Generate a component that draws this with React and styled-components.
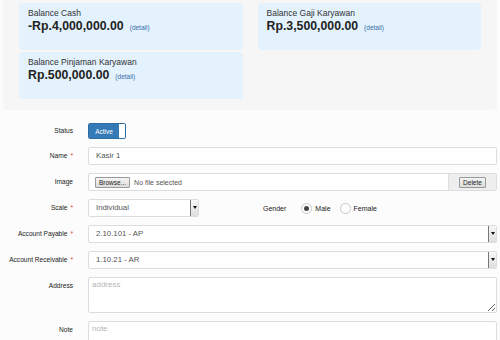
import React from "react";
import styled, { createGlobalStyle } from "styled-components";

const GlobalStyle = createGlobalStyle`
  body {
    margin: 0;
    background: #fcfcfc;
    font-family: "Liberation Sans", Arial, sans-serif;
    color: #333;
  }
`;

const Summary = styled.div`
  margin: 0 3px;
  padding: 3px 16px 11px;
  background: #f6f6f6;
  border-radius: 0 0 4px 4px;
  display: grid;
  grid-template-columns: 1fr 1fr;
  column-gap: 15px;
  row-gap: 2px;
`;

const Card = styled.div`
  height: 47px;
  box-sizing: border-box;
  padding: 5px 9px;
  background: #e3f2fd;
  border-radius: 3px;
`;

const CardLabel = styled.div`
  font-size: 8.5px;
  line-height: 11px;
  color: #333;
`;

const Amount = styled.div`
  font-size: 12.3px;
  line-height: 14px;
  font-weight: bold;
  color: #222;
  span {
    margin-left: 6px;
    font-size: 6.5px;
    font-weight: normal;
    color: #3b6ea8;
  }
`;

const Form = styled.div`
  padding: 13px 3px 0 0;
  display: flex;
  flex-direction: column;
  gap: 8px;
`;

const Row = styled.div`
  display: grid;
  grid-template-columns: 73px 1fr;
  column-gap: 15px;
  align-items: start;
`;

const Label = styled.div`
  text-align: right;
  font-size: 6.6px;
  line-height: ${(p) => p.$lh || 18}px;
  color: #222;
  white-space: nowrap;
  span {
    margin-left: 3px;
    color: #e0403c;
  }
`;

const Toggle = styled.div`
  display: flex;
  width: 38px;
  height: 16px;
  border: 1px solid #2e6da4;
  border-radius: 2px;
  box-sizing: border-box;
  overflow: hidden;
`;

const ToggleOn = styled.div`
  flex: 1;
  background: #337ab7;
  color: #fff;
  font-size: 6.5px;
  display: flex;
  align-items: center;
  justify-content: center;
`;

const Knob = styled.div`
  width: 6px;
  background: #fff;
`;

const Input = styled.div`
  height: 18px;
  box-sizing: border-box;
  border: 1px solid #ddd;
  border-radius: 2px;
  background: #fff;
  font-size: 7.8px;
  line-height: 16px;
  padding: 0 7px;
  color: #555;
  display: flex;
  align-items: center;
  overflow: hidden;
`;

const Group = styled.div`
  display: flex;
  height: 18px;
  box-sizing: border-box;
  border: 1px solid #ddd;
  border-radius: 2px;
  background: #fff;
  overflow: hidden;
`;

const FileField = styled.div`
  flex: 1;
  display: flex;
  align-items: center;
  padding-left: 6px;
  font-size: 7px;
  color: #555;
`;

const OldButton = styled.div`
  height: 9px;
  padding: 0 3px;
  margin-right: ${(p) => (p.$last ? 0 : 4)}px;
  border: 1px solid #999;
  border-radius: 1px;
  background: linear-gradient(#f4f4f4, #dcdcdc);
  font-size: 6.5px;
  line-height: 9px;
  color: #222;
`;

const Addon = styled.div`
  width: 47px;
  background: #eee;
  border-left: 1px solid #ddd;
  display: flex;
  align-items: center;
  justify-content: center;
`;

const SelectBox = styled(Input)`
  padding-right: 0;
  justify-content: space-between;
  width: ${(p) => p.$w || "auto"};
`;

const Arrow = styled.div`
  width: 9px;
  height: 18px;
  box-sizing: border-box;
  margin-top: -1px;
  margin-right: -1px;
  border: 1px solid #777;
  background: linear-gradient(#f6f6f6, #dedede);
  display: flex;
  align-items: center;
  justify-content: center;
  &::after {
    content: "";
    border-left: 2.5px solid transparent;
    border-right: 2.5px solid transparent;
    border-top: 3px solid #111;
  }
`;

const Inline = styled.div`
  display: flex;
  align-items: center;
  height: 18px;
`;

const Gender = styled.div`
  display: flex;
  align-items: center;
  margin-left: 64px;
  font-size: 7px;
  color: #222;
`;

const Radio = styled.span`
  width: 9px;
  height: 9px;
  border: 1px solid #c8c8c8;
  border-radius: 50%;
  background: #fff;
  margin: 0 3px 0 ${(p) => p.$ml}px;
  display: flex;
  align-items: center;
  justify-content: center;
  &::after {
    content: "";
    width: 5px;
    height: 5px;
    border-radius: 50%;
    background: ${(p) => (p.$on ? "#444" : "transparent")};
  }
`;

const Area = styled.textarea`
  height: ${(p) => p.$h}px;
  box-sizing: border-box;
  border: 1px solid #ddd;
  border-radius: 2px;
  background: #fff;
  font-family: inherit;
  font-size: 8px;
  padding: 2px 3px;
  margin: 0;
  outline: none;
  &::placeholder {
    color: #b5b5b5;
  }
`;

const balances = [
  { label: "Balance Cash", amount: "-Rp.4,000,000.00" },
  { label: "Balance Gaji Karyawan", amount: "Rp.3,500,000.00" },
  { label: "Balance Pinjaman Karyawan", amount: "Rp.500,000.00" }
];

const Req = () => <span>*</span>;

export default function App() {
  return (
    <>
      <GlobalStyle />
      <Summary>
        {balances.map((b) => (
          <Card key={b.label}>
            <CardLabel>{b.label}</CardLabel>
            <Amount>
              {b.amount}
              <span>(detail)</span>
            </Amount>
          </Card>
        ))}
      </Summary>
      <Form>
        <Row>
          <Label $lh={16}>Status</Label>
          <Toggle>
            <ToggleOn>Active</ToggleOn>
            <Knob />
          </Toggle>
        </Row>
        <Row>
          <Label>
            Name<Req />
          </Label>
          <Input>Kasir 1</Input>
        </Row>
        <Row>
          <Label>Image</Label>
          <Group>
            <FileField>
              <OldButton>Browse...</OldButton>
              No file selected
            </FileField>
            <Addon>
              <OldButton $last>Delete</OldButton>
            </Addon>
          </Group>
        </Row>
        <Row>
          <Label>
            Scale<Req />
          </Label>
          <Inline>
            <SelectBox $w="111px">
              Individual
              <Arrow />
            </SelectBox>
            <Gender>
              Gender
              <Radio $ml={15} $on />
              Male
              <Radio $ml={9} />
              Female
            </Gender>
          </Inline>
        </Row>
        <Row>
          <Label>
            Account Payable<Req />
          </Label>
          <SelectBox>
            2.10.101 - AP
            <Arrow />
          </SelectBox>
        </Row>
        <Row>
          <Label>
            Account Receivable<Req />
          </Label>
          <SelectBox>
            1.10.21 - AR
            <Arrow />
          </SelectBox>
        </Row>
        <Row>
          <Label>Address</Label>
          <Area $h={36} placeholder="address" />
        </Row>
        <Row>
          <Label>Note</Label>
          <Area $h={36} placeholder="note" />
        </Row>
      </Form>
    </>
  );
}
